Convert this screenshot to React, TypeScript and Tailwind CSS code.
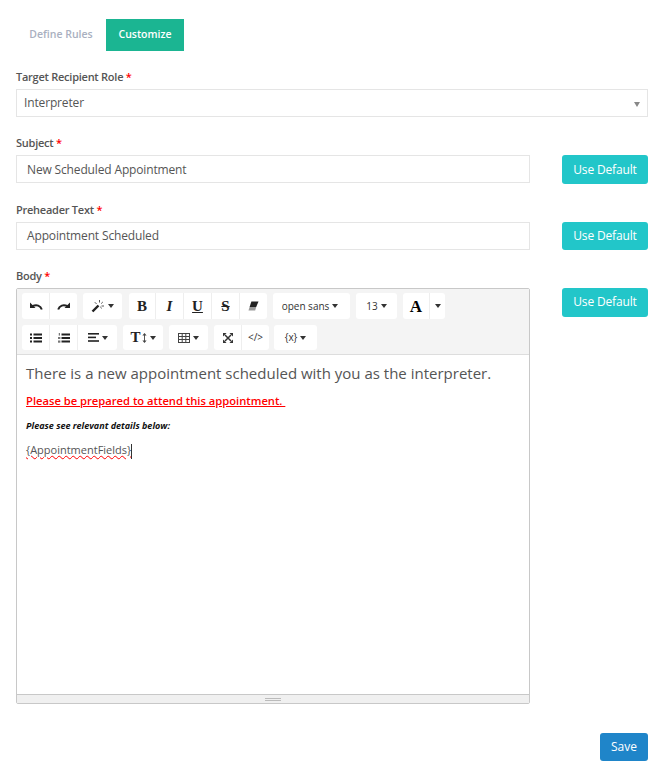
import type { ReactNode } from "react";

const Caret = () => (
  <span className="inline-block ml-[3px] border-x-[3px] border-t-[4px] border-x-transparent border-t-[#333]" />
);

function Group({ children }: { children: ReactNode }) {
  return <div className="flex rounded-[3px] bg-white">{children}</div>;
}

function Btn({ w, children, last }: { w: string; children: ReactNode; last?: boolean }) {
  return (
    <div className={`h-full flex items-center justify-center text-[#333] ${w} ${last ? "" : "border-r border-[#eee]"}`}>
      {children}
    </div>
  );
}

function Label({ text }: { text: string }) {
  return (
    <label className="block h-[16px] leading-[16px] text-[11px] tracking-[-0.25px] font-semibold text-[#555]">
      {text} <span className="text-[#f00]">*</span>
    </label>
  );
}

function UseDefault({ h }: { h: string }) {
  return (
    <button className={`w-[86px] ${h} rounded-[3px] bg-[#22c6c9] text-white text-[12px] tracking-[-0.15px]`}>
      Use Default
    </button>
  );
}

// toolbar icons, drawn to match the summernote font glyphs
const UndoIcon = ({ flip }: { flip?: boolean }) => (
  <svg width="14" height="10" viewBox="0 0 14 10" className={flip ? "-scale-x-100" : ""}>
    <path d="M1 1.5V7H6.5Z" fill="#222" />
    <path d="M12.8 8.5C11.6 4.6 7.6 3.2 3.4 5.2" fill="none" stroke="#222" strokeWidth="2" />
  </svg>
);

const WandIcon = () => (
  <svg width="14" height="14" viewBox="0 0 14 14">
    <path d="M1.5 12.5L7.5 6.5" stroke="#222" strokeWidth="2.4" />
    <path d="M8.5 1V3.5M11.8 3L10.2 4.6M13 7H10.5M3.8 3.2L5.6 5M10.8 9.4L9.2 7.8" stroke="#555" strokeWidth="1" fill="none" />
  </svg>
);

const EraserIcon = () => (
  <svg width="11" height="10" viewBox="0 0 11 10">
    <path d="M3.4 0.5H10.5L8.2 6H1.6Z" fill="#222" />
    <path d="M1.6 6H8.2L7.2 9.5H0.5Z" fill="#999" />
  </svg>
);

const ListIcon = () => (
  <svg width="12" height="10" viewBox="0 0 12 10" fill="#222">
    <rect x="0" y="0.5" width="2" height="2" />
    <rect x="0" y="4" width="2" height="2" />
    <rect x="0" y="7.5" width="2" height="2" />
    <rect x="3.5" y="0.5" width="8.5" height="2" />
    <rect x="3.5" y="4" width="8.5" height="2" />
    <rect x="3.5" y="7.5" width="8.5" height="2" />
  </svg>
);

const OrderedIcon = () => (
  <svg width="12" height="10" viewBox="0 0 12 10" fill="#222">
    <rect x="0.8" y="0" width="1" height="2.6" fill="#555" />
    <rect x="0" y="4" width="2.4" height="2" fill="#777" />
    <rect x="0" y="7.5" width="2.4" height="2.2" fill="#777" />
    <rect x="3.5" y="0.5" width="8.5" height="2" />
    <rect x="3.5" y="4" width="8.5" height="2" />
    <rect x="3.5" y="7.5" width="8.5" height="2" />
  </svg>
);

const AlignIcon = () => (
  <svg width="11" height="9" viewBox="0 0 11 9" fill="#222">
    <rect x="0" y="0" width="11" height="1.6" />
    <rect x="0" y="3.6" width="8" height="1.6" />
    <rect x="0" y="7.2" width="11" height="1.6" />
  </svg>
);

const TableIcon = () => (
  <svg width="12" height="10" viewBox="0 0 12 10" fill="none" stroke="#444" strokeWidth="1">
    <rect x="0.5" y="0.5" width="11" height="9" />
    <path d="M4.2 0.5V9.5M7.8 0.5V9.5M0.5 3.5H11.5M0.5 6.5H11.5" />
  </svg>
);

const ExpandIcon = () => (
  <svg width="10" height="10" viewBox="0 0 10 10">
    <path d="M2 2L8 8M8 2L2 8" stroke="#333" strokeWidth="1.5" />
    <path d="M0 0H3.6L0 3.6ZM10 0V3.6L6.4 0ZM0 10V6.4L3.6 10ZM10 10H6.4L10 6.4Z" fill="#333" />
  </svg>
);

const SizeArrow = () => (
  <svg width="5" height="10" viewBox="0 0 5 10" className="ml-px">
    <path d="M2.5 1.5V8.5" stroke="#444" strokeWidth="0.9" />
    <path d="M2.5 0L4.6 2.4H0.4ZM2.5 10L0.4 7.6H4.6Z" fill="#444" />
  </svg>
);

const serifGlyph = "font-['Liberation_Serif',serif] font-bold text-[#222] leading-none";

export default function App() {
  return (
    <div className="w-[660px] h-[769px] overflow-hidden bg-white pl-4 pr-3 pt-[19px] font-['Open_Sans',sans-serif]">
      <div className="flex h-[32px] text-[10.5px] font-semibold">
        <div className="w-[90px] flex items-center justify-center text-[#a9b0c0]">Define Rules</div>
        <div className="w-[78px] flex items-center justify-center bg-[#1bb592] text-white">Customize</div>
      </div>

      <div className="mt-[18px]"><Label text="Target Recipient Role" /></div>
      <div className="mt-[4px] relative h-[28px] border border-[#e5e5e5] flex items-center pl-[7px] text-[12px] tracking-[-0.15px] text-[#555]">
        Interpreter
        <span className="absolute right-[7px] top-[12px] border-x-[3px] border-t-[5px] border-x-transparent border-t-[#888]" />
      </div>

      <div className="mt-[18px]"><Label text="Subject" /></div>
      <div className="mt-[4px] flex justify-between items-start">
        <div className="w-[514px] h-[28px] pt-px border border-[#e5e5e5] flex items-center pl-[10px] text-[12px] tracking-[-0.15px] text-[#555]">
          New Scheduled Appointment
        </div>
        <UseDefault h="h-[29px]" />
      </div>

      <div className="mt-[18px]"><Label text="Preheader Text" /></div>
      <div className="mt-[4px] flex justify-between items-start">
        <div className="w-[514px] h-[28px] border border-[#e5e5e5] flex items-center pl-[10px] text-[12px] tracking-[-0.15px] text-[#555]">
          Appointment Scheduled
        </div>
        <UseDefault h="h-[28px]" />
      </div>

      <div className="mt-[18px]"><Label text="Body" /></div>
      <div className="mt-[4px] flex justify-between items-start">
        <div className="w-[514px] h-[416px] border border-[#c8c8c8] rounded-[2px] flex flex-col">
          <div className="h-[66px] bg-[#f4f4f4] border-b border-[#ddd] pl-[5px] pt-[4px] flex flex-col gap-[6px]">
            <div className="flex h-[26px] gap-[6px]">
              <Group>
                <Btn w="w-[28px]"><UndoIcon /></Btn>
                <Btn w="w-[27px]" last><UndoIcon flip /></Btn>
              </Group>
              <Group>
                <Btn w="w-[39px]" last><WandIcon /><Caret /></Btn>
              </Group>
              <div className="flex rounded-[3px] bg-white ml-px">
                <Btn w="w-[27px]"><span className={`${serifGlyph} text-[15px]`}>B</span></Btn>
                <Btn w="w-[28px]"><span className={`${serifGlyph} text-[15px] italic`}>I</span></Btn>
                <Btn w="w-[28px]"><span className={`${serifGlyph} text-[15px] underline`}>U</span></Btn>
                <Btn w="w-[28px]"><span className={`${serifGlyph} text-[15px] line-through`}>S</span></Btn>
                <Btn w="w-[27px]" last><EraserIcon /></Btn>
              </div>
              <Group>
                <Btn w="w-[77px]" last><span className="text-[10px] -ml-[3px]">open sans</span><Caret /></Btn>
              </Group>
              <Group>
                <Btn w="w-[41px]" last><span className="text-[10px]">13</span><Caret /></Btn>
              </Group>
              <Group>
                <Btn w="w-[27px]"><span className={`${serifGlyph} text-[17px] text-black`}>A</span></Btn>
                <Btn w="w-[15px]" last><span className="-ml-[3px] flex"><Caret /></span></Btn>
              </Group>
            </div>
            <div className="flex h-[25px] gap-[6px]">
              <Group>
                <Btn w="w-[28px]"><ListIcon /></Btn>
                <Btn w="w-[28px]"><OrderedIcon /></Btn>
                <Btn w="w-[39px]" last><AlignIcon /><Caret /></Btn>
              </Group>
              <Group>
                <Btn w="w-[40px]" last><span className={`${serifGlyph} text-[15px]`}>T</span><SizeArrow /><Caret /></Btn>
              </Group>
              <Group>
                <Btn w="w-[39px]" last><TableIcon /><Caret /></Btn>
              </Group>
              <Group>
                <Btn w="w-[28px]"><ExpandIcon /></Btn>
                <Btn w="w-[27px]" last><span className="text-[10px]">&lt;/&gt;</span></Btn>
              </Group>
              <div className="flex rounded-[3px] bg-white -ml-px">
                <Btn w="w-[43px]" last><span className="text-[10px]">{"{x}"}</span><Caret /></Btn>
              </div>
            </div>
          </div>
          <div className="flex-1 px-[9px] pt-[6px]">
            <p className="text-[15px] leading-[24px] text-[#555] whitespace-nowrap">There is a new appointment scheduled with you as the interpreter.</p>
            <p className="mt-[7px] text-[11.2px] leading-[17px] font-semibold text-[#f00] underline whitespace-pre">Please be prepared to attend this appointment. </p>
            <p className="mt-[10px] text-[9px] leading-[14px] font-bold italic text-[#111]">Please see relevant details below:</p>
            <p className="mt-[8px] text-[11px] leading-[17px] text-[#555]">
              <span className="underline decoration-wavy decoration-[#f00] decoration-1">{"{AppointmentFields}"}</span>
              <span className="inline-block w-px h-[15px] bg-[#333] align-middle" />
            </p>
          </div>
          <div className="h-[9px] bg-[#f0f0f0] border-t border-[#c8c8c8] flex flex-col items-center justify-center gap-px">
            <div className="w-4 h-px bg-[#bbb]" />
            <div className="w-4 h-px bg-[#bbb]" />
          </div>
        </div>
        <UseDefault h="h-[29px] pb-[2px]" />
      </div>

      <div className="mt-[29px] flex justify-end">
        <button className="w-[48px] h-[28px] rounded-[3px] bg-[#1f85c9] text-white text-[12px]">Save</button>
      </div>
    </div>
  );
}
